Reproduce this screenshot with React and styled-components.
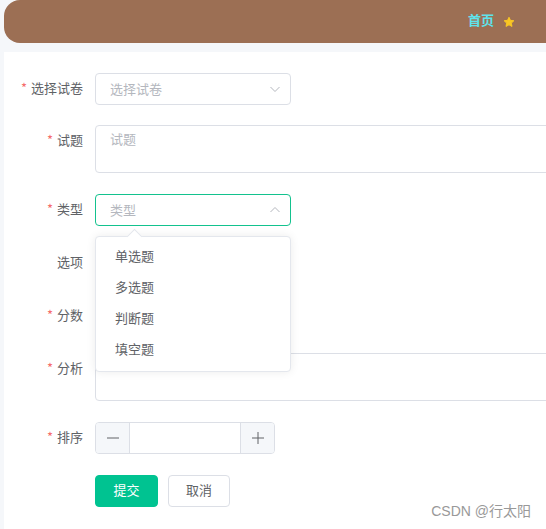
import React from 'react'
import styled, { createGlobalStyle } from 'styled-components'

const GlobalStyle = createGlobalStyle`
  html, body {
    margin: 0;
    padding: 0;
    background: #f5f7fa;
    overflow: hidden;
  }
  body {
    font-family: "Noto Sans CJK SC", "Liberation Sans", sans-serif;
    font-size: 13px;
    color: #606266;
  }
`

const Page = styled.div`
  position: relative;
  width: 546px;
  height: 529px;
  overflow: hidden;
`

const Header = styled.div`
  margin-left: 4px;
  height: 43px;
  background: #9c6f54;
  border-radius: 16px 0 0 16px;
  display: flex;
  align-items: center;
  justify-content: flex-end;
  padding-right: 31px;
  gap: 9px;
`

const HomeLink = styled.span`
  color: #5ee3ec;
  font-weight: bold;
  font-size: 13px;
  line-height: 1;
  margin-top: -4px;
`

const Panel = styled.div`
  margin: 9px 0 0 4px;
  background: #fff;
  height: 480px;
  padding-top: 21px;
  box-sizing: border-box;
`

const Row = styled.div`
  display: flex;
  align-items: flex-start;
  margin-bottom: ${p => p.$gap || 21}px;
  min-height: ${p => p.$h || 32}px;
`

const Label = styled.label`
  width: 91px;
  padding-right: 12px;
  padding-bottom: 3px;
  box-sizing: border-box;
  text-align: right;
  line-height: 29px;
  color: #606266;
  white-space: nowrap;
  flex-shrink: 0;
`

const Star = styled.span`
  color: #f56c6c;
  margin-right: 4px;
`

const Control = styled.div`
  position: relative;
  flex-shrink: 0;
`

const SelectBox = styled.div`
  width: 196px;
  height: 32px;
  box-sizing: border-box;
  border: 1px solid ${p => (p.$focus ? '#13c28e' : '#dcdfe6')};
  border-radius: 4px;
  display: flex;
  align-items: center;
  justify-content: space-between;
  padding: 0 9px 2px 14px;
  background: #fff;
`

const Placeholder = styled.span`
  color: #b4b7be;
  font-size: 13px;
`

const TextArea = styled.div`
  width: 500px;
  height: 48px;
  box-sizing: border-box;
  border: 1px solid #dcdfe6;
  border-radius: 4px;
  padding: 2px 14px;
  line-height: 22px;
`

const Dropdown = styled.div`
  position: absolute;
  top: 42px;
  left: 0;
  width: 196px;
  box-sizing: border-box;
  background: #fff;
  border: 1px solid #e4e7ed;
  border-radius: 4px;
  box-shadow: 0 0 10px rgba(0, 0, 0, 0.08);
  padding: 5px 0;
  z-index: 5;

  &::before {
    content: '';
    position: absolute;
    top: -6px;
    left: 33px;
    width: 10px;
    height: 10px;
    background: #fff;
    border-left: 1px solid #e4e7ed;
    border-top: 1px solid #e4e7ed;
    transform: rotate(45deg);
  }
`

const Option = styled.div`
  height: 31px;
  line-height: 28px;
  padding-left: 19px;
  box-sizing: border-box;
  color: #606266;
  font-size: 13px;
`

const NumberBox = styled.div`
  width: 180px;
  height: 32px;
  box-sizing: border-box;
  border: 1px solid #dcdfe6;
  border-radius: 4px;
  display: flex;
  overflow: hidden;
`

const Step = styled.div`
  width: 33px;
  background: #f5f7fa;
  display: flex;
  align-items: center;
  justify-content: center;
  color: #606266;
  ${p => (p.$side === 'left' ? 'border-right: 1px solid #dcdfe6;' : 'border-left: 1px solid #dcdfe6;')}
`

const NumberField = styled.div`
  flex: 1;
`

const Buttons = styled.div`
  display: flex;
  gap: 10px;
  margin-left: 91px;
`

const Button = styled.button`
  height: 32px;
  width: ${p => (p.$primary ? 63 : 62)}px;
  padding: 0 0 3px;
  border-radius: 4px;
  font-family: inherit;
  font-size: 13px;
  border: 1px solid ${p => (p.$primary ? '#00c391' : '#dcdfe6')};
  background: ${p => (p.$primary ? '#00c391' : '#fff')};
  color: ${p => (p.$primary ? '#fff' : '#606266')};
`

const Watermark = styled.div`
  position: absolute;
  right: 15px;
  bottom: 9px;
  color: #999;
  font-size: 14px;
  font-family: "Liberation Sans", "Noto Sans CJK SC", sans-serif;
`

function Chevron({ up }) {
  return (
    <svg width="12" height="12" viewBox="0 0 12 12" style={{ marginBottom: -2 }}>
      <path
        d={up ? 'M1.5 8 L6 3.5 L10.5 8' : 'M1.5 4 L6 8.5 L10.5 4'}
        fill="none"
        stroke="#b4b7be"
        strokeWidth="1"
      />
    </svg>
  )
}

function StarIcon() {
  return (
    <svg width="12" height="12" viewBox="0 0 24 24">
      <path
        d="M12 2.5l2.9 6.2 6.8.8-5 4.7 1.3 6.7L12 17.6l-6 3.3 1.3-6.7-5-4.7 6.8-.8z"
        fill="#f9c623"
        stroke="#f9c623"
        strokeWidth="2"
        strokeLinejoin="round"
      />
    </svg>
  )
}

function FieldLabel({ required, children }) {
  return (
    <Label>
      {required ? <Star>*</Star> : null}
      {children}
    </Label>
  )
}

export default function App() {
  const types = ['单选题', '多选题', '判断题', '填空题']
  return (
    <Page>
      <GlobalStyle />
      <Header>
        <HomeLink>首页</HomeLink>
        <StarIcon />
      </Header>
      <Panel>
        <Row $gap={20}>
          <FieldLabel required>选择试卷</FieldLabel>
          <Control>
            <SelectBox>
              <Placeholder>选择试卷</Placeholder>
              <Chevron />
            </SelectBox>
          </Control>
        </Row>
        <Row>
          <FieldLabel required>试题</FieldLabel>
          <Control>
            <TextArea>
              <Placeholder>试题</Placeholder>
            </TextArea>
          </Control>
        </Row>
        <Row>
          <FieldLabel required>类型</FieldLabel>
          <Control>
            <SelectBox $focus>
              <Placeholder>类型</Placeholder>
              <Chevron up />
            </SelectBox>
            <Dropdown>
              {types.map((t) => (
                <Option key={t}>{t}</Option>
              ))}
            </Dropdown>
          </Control>
        </Row>
        <Row $h={31}>
          <FieldLabel>选项</FieldLabel>
        </Row>
        <Row>
          <FieldLabel required>分数</FieldLabel>
          <Control>
            <SelectBox />
          </Control>
        </Row>
        <Row>
          <FieldLabel required>分析</FieldLabel>
          <Control>
            <TextArea />
          </Control>
        </Row>
        <Row>
          <FieldLabel required>排序</FieldLabel>
          <Control>
            <NumberBox>
              <Step $side="left">
                <svg width="14" height="14" viewBox="0 0 14 14">
                  <path d="M1 7 H13" stroke="#606266" strokeWidth="1" />
                </svg>
              </Step>
              <NumberField />
              <Step $side="right">
                <svg width="14" height="14" viewBox="0 0 14 14">
                  <path d="M1 7 H13 M7 1 V13" stroke="#606266" strokeWidth="1" />
                </svg>
              </Step>
            </NumberBox>
          </Control>
        </Row>
        <Buttons>
          <Button $primary>提交</Button>
          <Button>取消</Button>
        </Buttons>
      </Panel>
      <Watermark>CSDN @行太阳</Watermark>
    </Page>
  )
}
